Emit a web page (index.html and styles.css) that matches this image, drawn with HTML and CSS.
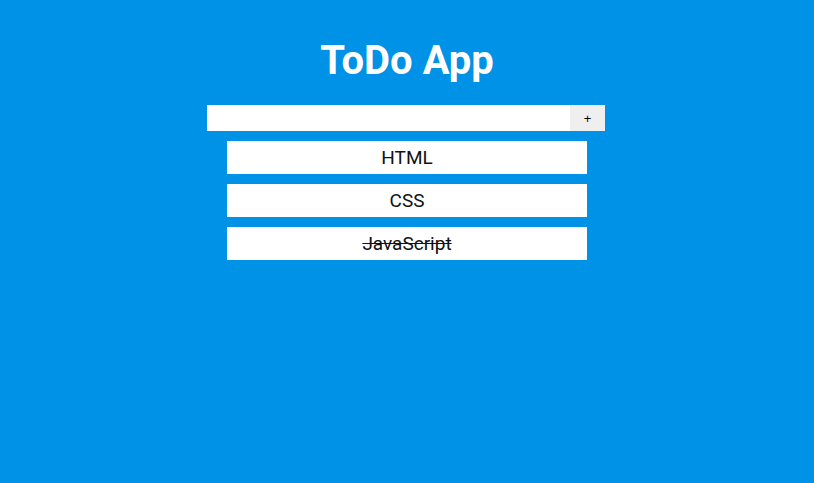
FILE: index.html
```html
<!doctype html>
<html lang="en">
<head>
<title>ToDo App</title>
<meta name="viewport" content="width=device-width, initial-scale=1.0">
<link rel="stylesheet" href="styles.css">
</head>
<body>

<main class="app">
	<h1 class="app-title">ToDo App</h1>
	<form class="add-form">
		<input class="add-input" type="text">
		<button class="add-button" type="button">+</button>
	</form>
	<ul class="todo-list">
		<li class="todo-item">HTML</li>
		<li class="todo-item">CSS</li>
		<li class="todo-item done">JavaScript</li>
	</ul>
</main>

</body>
</html>
```

FILE: styles.css
```css
html, body {
	margin: 0;
	height: 100%;
}
body {
	background: #0092e6;
	font-family: Roboto, "Liberation Sans", sans-serif;
}
.app {
	display: flex;
	flex-direction: column;
	align-items: center;
	padding-top: 36px;
}
.app-title {
	margin: 0;
	color: white;
	font-size: 40px;
	font-weight: bold;
	line-height: 50px;
}
.add-form {
	display: flex;
	margin-top: 19px;
	margin-right: 2px;
	width: 398px;
	height: 26px;
}
.add-input {
	flex: 1;
	border: 0;
	margin: 0;
	padding: 0 4px;
	background: white;
	outline: none;
}
.add-button {
	width: 35px;
	border: 0;
	margin: 0;
	padding: 0;
	background: #efefef;
	font-family: "Liberation Sans", sans-serif;
	font-size: 13px;
	color: black;
}
.todo-list {
	list-style: none;
	margin: 10px 0 0;
	padding: 0;
	display: flex;
	flex-direction: column;
	gap: 10px;
}
.todo-item {
	width: 360px;
	height: 33px;
	background: white;
	text-align: center;
	font-size: 19px;
	line-height: 33px;
	color: #111;
}
.todo-item.done {
	text-decoration: line-through;
}
```
